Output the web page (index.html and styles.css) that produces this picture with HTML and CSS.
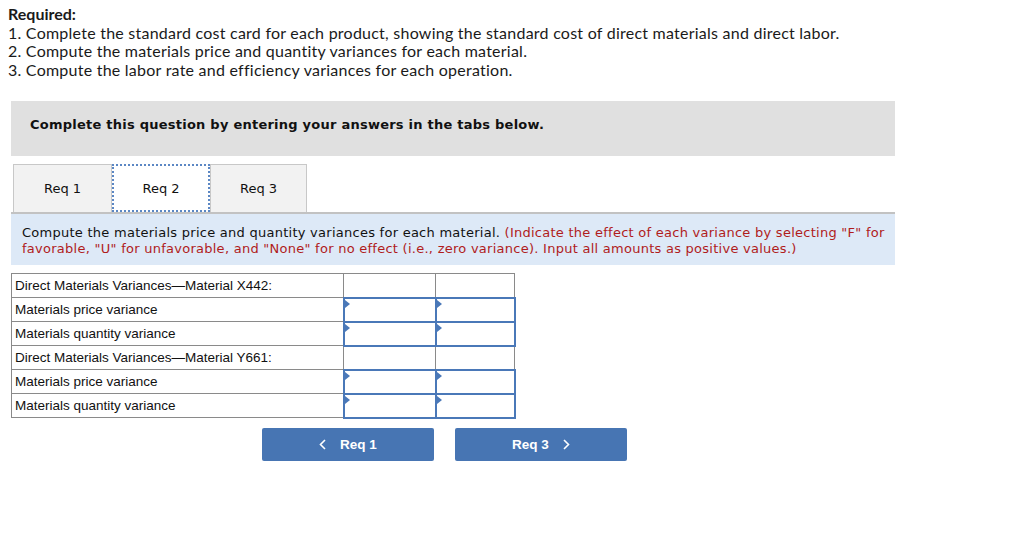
FILE: index.html
```html
<!DOCTYPE html>
<html>
<head>
<meta charset="utf-8">
<link rel="stylesheet" href="styles.css">
</head>
<body>
<div class="required">
  <div class="req-title">Required:</div>
  <div>1. Complete the standard cost card for each product, showing the standard cost of direct materials and direct labor.</div>
  <div>2. Compute the materials price and quantity variances for each material.</div>
  <div>3. Compute the labor rate and efficiency variances for each operation.</div>
</div>
<div class="panel">
  <div class="banner">Complete this question by entering your answers in the tabs below.</div>
  <div class="tabs">
    <div class="tab">Req 1</div>
    <div class="tab active">Req 2</div>
    <div class="tab">Req 3</div>
  </div>
  <div class="instr">Compute the materials price and quantity variances for each material. <span class="red">(Indicate the effect of each variance by selecting "F" for favorable, "U" for unfavorable, and "None" for no effect (i.e., zero variance). Input all amounts as positive values.)</span></div>
  <table class="grid">
    <tr><td class="lbl">Direct Materials Variances—Material X442:</td><td class="c2"></td><td class="c3"></td></tr>
    <tr><td class="lbl">Materials price variance</td><td class="inp"><span class="tri"></span></td><td class="inp"><span class="tri"></span></td></tr>
    <tr><td class="lbl">Materials quantity variance</td><td class="inp"><span class="tri"></span></td><td class="inp"><span class="tri"></span></td></tr>
    <tr><td class="lbl">Direct Materials Variances—Material Y661:</td><td></td><td></td></tr>
    <tr><td class="lbl">Materials price variance</td><td class="inp"><span class="tri"></span></td><td class="inp"><span class="tri"></span></td></tr>
    <tr><td class="lbl">Materials quantity variance</td><td class="inp"><span class="tri"></span></td><td class="inp"><span class="tri"></span></td></tr>
  </table>
  <div class="nav">
    <div class="btn"><svg class="chev" width="7" height="11" viewBox="0 0 7 11"><path d="M6 1 L1.5 5.5 L6 10" fill="none" stroke="#fff" stroke-width="1.6"/></svg><span>Req 1</span></div>
    <div class="btn"><span>Req 3</span><svg class="chev" width="7" height="11" viewBox="0 0 7 11"><path d="M1 1 L5.5 5.5 L1 10" fill="none" stroke="#fff" stroke-width="1.6"/></svg></div>
  </div>
</div>
</body>
</html>
```

FILE: styles.css
```css
html, body {
  margin: 0;
  padding: 0;
  background: #fff;
}
body {
  padding: 5px 0 0 0;
  color: #1a1a1a;
}
.required {
  padding-left: 8px;
  font-family: Lato, "Open Sans", sans-serif;
  font-size: 16px;
  letter-spacing: 0.24px;
  line-height: 18.5px;
}
.req-title {
  font-weight: bold;
  letter-spacing: 0;
}
.panel {
  margin: 22px 0 0 11px;
  width: 884px;
}
.banner {
  background: #e0e0e0;
  height: 55px;
  box-sizing: border-box;
  padding: 0 0 8px 19px;
  display: flex;
  align-items: center;
  font-family: "DejaVu Sans", Verdana, sans-serif;
  font-weight: bold;
  font-size: 13px;
  letter-spacing: 0.24px;
  color: #111;
}
.tabs {
  display: flex;
  margin-top: 8px;
  padding-left: 2px;
}
.tab {
  width: 99px;
  height: 48px;
  box-sizing: border-box;
  background: #f2f2f2;
  border: 1px solid #c8c8c8;
  border-bottom: none;
  display: flex;
  align-items: center;
  justify-content: center;
  font-family: "DejaVu Sans", Verdana, sans-serif;
  font-size: 13px;
  color: #111;
}
.tab.active {
  width: 98px;
  background: #fff;
  border: 2px dotted #5b87c4;
}
.tab:last-child {
  width: 97px;
}
.instr {
  background: #dde9f7;
  border-top: 2px solid #c2c2c2;
  padding: 11px 8px 8px 11px;
  font-family: "DejaVu Sans", Verdana, sans-serif;
  font-size: 13px;
  letter-spacing: 0.26px;
  line-height: 16px;
  color: #111;
}
.red {
  color: #b01c1c;
}
.grid {
  margin-top: 8px;
  border-collapse: collapse;
  font-family: "Liberation Sans", Arial, sans-serif;
  font-size: 13.5px;
  color: #111;
}
.grid td {
  border: 1px solid #8a8a8a;
  height: 24px;
  padding: 0;
  box-sizing: border-box;
}
.grid td.lbl {
  width: 332px;
  padding-left: 3px;
}
.grid td.c2, .grid tr td:nth-child(2) {
  width: 92px;
}
.grid td.c3, .grid tr td:nth-child(3) {
  width: 79px;
}
.grid td.inp {
  border: 2px solid #4a78b8;
  position: relative;
}
.tri {
  position: absolute;
  left: 0;
  top: 1px;
  width: 0;
  height: 0;
  border-top: 4px solid transparent;
  border-bottom: 4px solid transparent;
  border-left: 5px solid #4a78b8;
}
.nav {
  display: flex;
  gap: 21px;
  margin: 9px 0 0 251px;
}
.btn {
  width: 172px;
  height: 33px;
  background: #4775b3;
  border-radius: 2px;
  display: flex;
  align-items: center;
  justify-content: center;
  gap: 14px;
  color: #fff;
  font-family: "Liberation Sans", Arial, sans-serif;
  font-weight: bold;
  font-size: 13.5px;
}
.chev {
  display: block;
}
```
